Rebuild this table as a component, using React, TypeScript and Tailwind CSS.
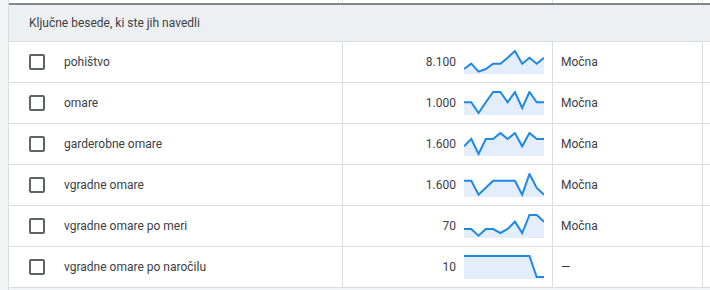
const rows = [
  { kw: 'pohištvo', vol: '8.100', comp: 'Močna', pts: [19, 13.7, 21.7, 19, 13.7, 13.7, 7.7, 1, 13.7, 7.7, 13.7, 7.7] },
  { kw: 'omare', vol: '1.000', comp: 'Močna', pts: [11.3, 11.3, 22, 11.3, 1, 1, 11.3, 1, 17, 1, 11.3, 11.3] },
  { kw: 'garderobne omare', vol: '1.600', comp: 'Močna', pts: [14.3, 7, 22, 7, 7, 1, 7, 1, 14.3, 1, 7, 7] },
  { kw: 'vgradne omare', vol: '1.600', comp: 'Močna', pts: [7.7, 7.7, 21.7, 14.7, 7.7, 7.7, 7.7, 7.7, 21.7, 1, 15, 21.7] },
  { kw: 'vgradne omare po meri', vol: '70', comp: 'Močna', pts: [15, 15, 21.7, 15, 15, 19, 15, 7.7, 19, 1, 1, 7.7] },
  { kw: 'vgradne omare po naročilu', vol: '10', comp: '—', pts: [1, 1, 1, 1, 1, 1, 1, 1, 1, 1, 22, 22] },
];

const Sparkline = ({ pts }: { pts: number[] }) => {
  const step = 80 / (pts.length - 1);
  const line = pts.map((y, i) => `${(i * step).toFixed(2)},${y}`).join(' ');
  const area = `0,24 ${line} 80,24`;
  return (
    <svg width="80" height="24" viewBox="0 0 80 24" className="block">
      <polygon points={area} fill="#e3edfc" />
      <polyline points={line} fill="none" stroke="#1e88e5" strokeWidth="2" strokeLinejoin="miter" />
    </svg>
  );
};

const Checkbox = () => (
  <div className="w-[16px] h-[16px] rounded-[2px] border-2 border-[#5f6368] shrink-0" />
);

const cols = 'grid grid-cols-[334px_210px_150px_1fr]';

export default function App() {
  return (
    <div className="w-[710px] h-[290px] overflow-hidden flex bg-white text-[12px] text-[#3c4043]" style={{ fontFamily: 'Roboto, "Noto Sans", sans-serif' }}>
      <div className="w-[9px] shrink-0 bg-[#f1f3f4] border-r border-[#dadce0]" />
      <div className="flex-1 flex flex-col">
        <div className={`${cols} h-[3px]`}>
          <div className="border-r border-[#dadce0]" />
          <div className="border-r border-[#dadce0]" />
          <div className="border-r border-[#dadce0]" />
          <div />
        </div>
        <div className="h-[2px] bg-[#80868b]" />
        <div className="h-[37px] bg-[#edf0f2] border-b border-[#dadce0] flex items-center pl-[20px]">
          Ključne besede, ki ste jih navedli
        </div>
        {rows.map((r) => (
          <div key={r.kw} className={`${cols} h-[41px] border-b border-[#dadce0]`}>
            <div className="border-r border-[#dadce0] flex items-center pl-[20px] gap-[19px]">
              <Checkbox />
              <span>{r.kw}</span>
            </div>
            <div className="border-r border-[#dadce0] flex items-center justify-end gap-[8px] pr-[8px]">
              <span>{r.vol}</span>
              <Sparkline pts={r.pts} />
            </div>
            <div className="border-r border-[#dadce0] flex items-center pl-[8px]">
              {r.comp}
            </div>
            <div />
          </div>
        ))}
        <div className="flex-1 bg-[#f1f3f4]" />
      </div>
    </div>
  );
}
